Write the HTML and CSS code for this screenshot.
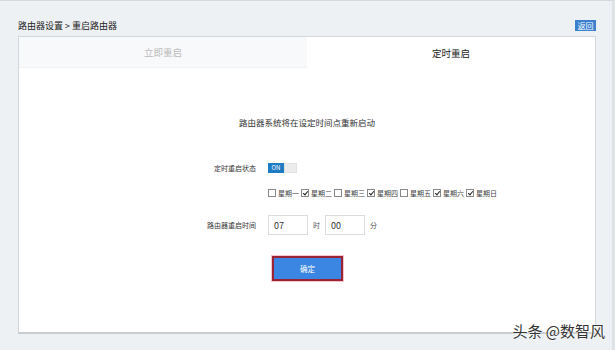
FILE: index.html
```html
<!DOCTYPE html>
<html lang="zh-CN">
<head>
    <meta charset="UTF-8">
    <title>重启路由器</title>
    <link rel="stylesheet" href="styles.css">
</head>
<body>
    <div class="page">
        <!-- Breadcrumb and back button -->
        <div class="topbar">
            <span class="crumb">路由器设置 &gt; 重启路由器</span>
            <button class="back">返回</button>
        </div>

        <div class="card">
            <div class="tabs">
                <div class="tab">立即重启</div>
                <div class="tab active">定时重启</div>
            </div>

            <div class="content">
                <p class="hint">路由器系统将在设定时间点重新启动</p>

                <div class="row state-row">
                    <span class="label">定时重启状态</span>
                    <span class="toggle"><span class="on">ON</span><span class="off"></span></span>
                </div>

                <div class="row days">
                    <span class="label"></span>
                    <div class="weekdays">
                        <label><span class="box"></span>星期一</label>
                        <label><span class="box checked"></span>星期二</label>
                        <label><span class="box"></span>星期三</label>
                        <label><span class="box checked"></span>星期四</label>
                        <label><span class="box"></span>星期五</label>
                        <label><span class="box checked"></span>星期六</label>
                        <label><span class="box checked"></span>星期日</label>
                    </div>
                </div>

                <div class="row time-row">
                    <span class="label">路由器重启时间</span>
                    <input class="time" type="text" value="07">
                    <span class="unit">时</span>
                    <input class="time" type="text" value="00">
                    <span class="unit">分</span>
                </div>

                <div class="row">
                    <span class="label"></span>
                    <button class="submit">确定</button>
                </div>
            </div>
        </div>

        <div class="watermark">头条 @数智风</div>
    </div>
</body>
</html>
```

FILE: styles.css
```css
body {
    margin: 0;
    background-color: #eef1f4;
    font-family: "Noto Sans CJK SC", "Liberation Sans", sans-serif;
    color: #333;
}

.page {
    position: relative;
    width: 615px;
    height: 350px;
    box-sizing: border-box;
    border-top: 1px solid #d6dadf;
    border-right: 3px solid #dfe3e7;
    padding: 0 16px 0 18px;
}

.topbar {
    display: flex;
    justify-content: space-between;
    align-items: flex-end;
    height: 35px;
    padding-bottom: 5px;
    box-sizing: border-box;
}

.crumb {
    font-size: 9px;
    color: #222;
    line-height: 12px;
    margin-bottom: -1px;
}

.back {
    background-color: #3a80cf;
    color: white;
    border: none;
    font-family: inherit;
    font-size: 8px;
    padding: 0;
    width: 21px;
    height: 11px;
    line-height: 11px;
    margin-right: 0;
}

.card {
    background-color: white;
    border: 1px solid #d3d7db;
    border-bottom: 2px solid #c9cdd1;
    height: 298px;
    box-sizing: border-box;
    width: 578px;
}

.tabs {
    display: flex;
    height: 31px;
}

.tab {
    flex: 1;
    display: flex;
    align-items: center;
    justify-content: center;
    font-size: 9.5px;
    color: #bbb;
    background-color: #f8f9fa;
    border-bottom: 1px solid #f1f2f3;
}

.tab.active {
    background-color: white;
    color: #222;
    border-bottom: none;
}

.content {
    padding-top: 48px;
}

.hint {
    margin: 0 0 34px;
    text-align: center;
    font-size: 8.5px;
    line-height: 12px;
}

.row {
    display: flex;
    align-items: center;
    font-size: 7px;
}

.label {
    width: 249px;
    flex-shrink: 0;
    text-align: right;
    padding-right: 12px;
    box-sizing: border-box;
}

.state-row {
    height: 12px;
}

.toggle {
    display: flex;
    height: 10px;
}

.toggle .on {
    width: 16px;
    background-color: #1f7bc2;
    color: white;
    font-size: 6px;
    line-height: 10px;
    text-align: center;
}

.toggle .off {
    width: 13px;
    background-color: #ececec;
    border: 1px solid #e2e2e2;
    box-sizing: border-box;
}

.days {
    margin-top: 13px;
    height: 12px;
}

.weekdays {
    display: flex;
    gap: 2px;
    color: #444;
}

.weekdays label {
    display: flex;
    align-items: center;
    gap: 2px;
}

.box {
    width: 8px;
    height: 8px;
    box-sizing: border-box;
    border: 1px solid #888;
    background-color: white;
    position: relative;
}

.box.checked::after {
    content: "";
    position: absolute;
    left: 2px;
    top: 0;
    width: 2px;
    height: 4px;
    border: solid #222;
    border-width: 0 1px 1px 0;
    transform: rotate(40deg);
}

.time-row {
    margin-top: 16px;
}

.time {
    width: 40px;
    height: 20px;
    box-sizing: border-box;
    border: 1px solid #dcdcdc;
    font-family: inherit;
    font-size: 9px;
    color: #333;
    padding: 0 5px;
    outline: none;
}

.unit {
    padding: 0 5px;
    color: #555;
}

.submit {
    margin-top: 21px;
    margin-left: 4px;
    width: 71px;
    height: 25px;
    background-color: #3a86e2;
    color: white;
    font-family: inherit;
    font-size: 7.5px;
    border: 2px solid #9c2336;
    box-shadow: 0 0 0 1px #f2c6cb;
    padding: 0;
}

.watermark {
    position: absolute;
    right: 7px;
    bottom: 9px;
    font-size: 15px;
    color: #333;
    text-shadow: 0 0 2px white, 0 0 2px white;
}
```
